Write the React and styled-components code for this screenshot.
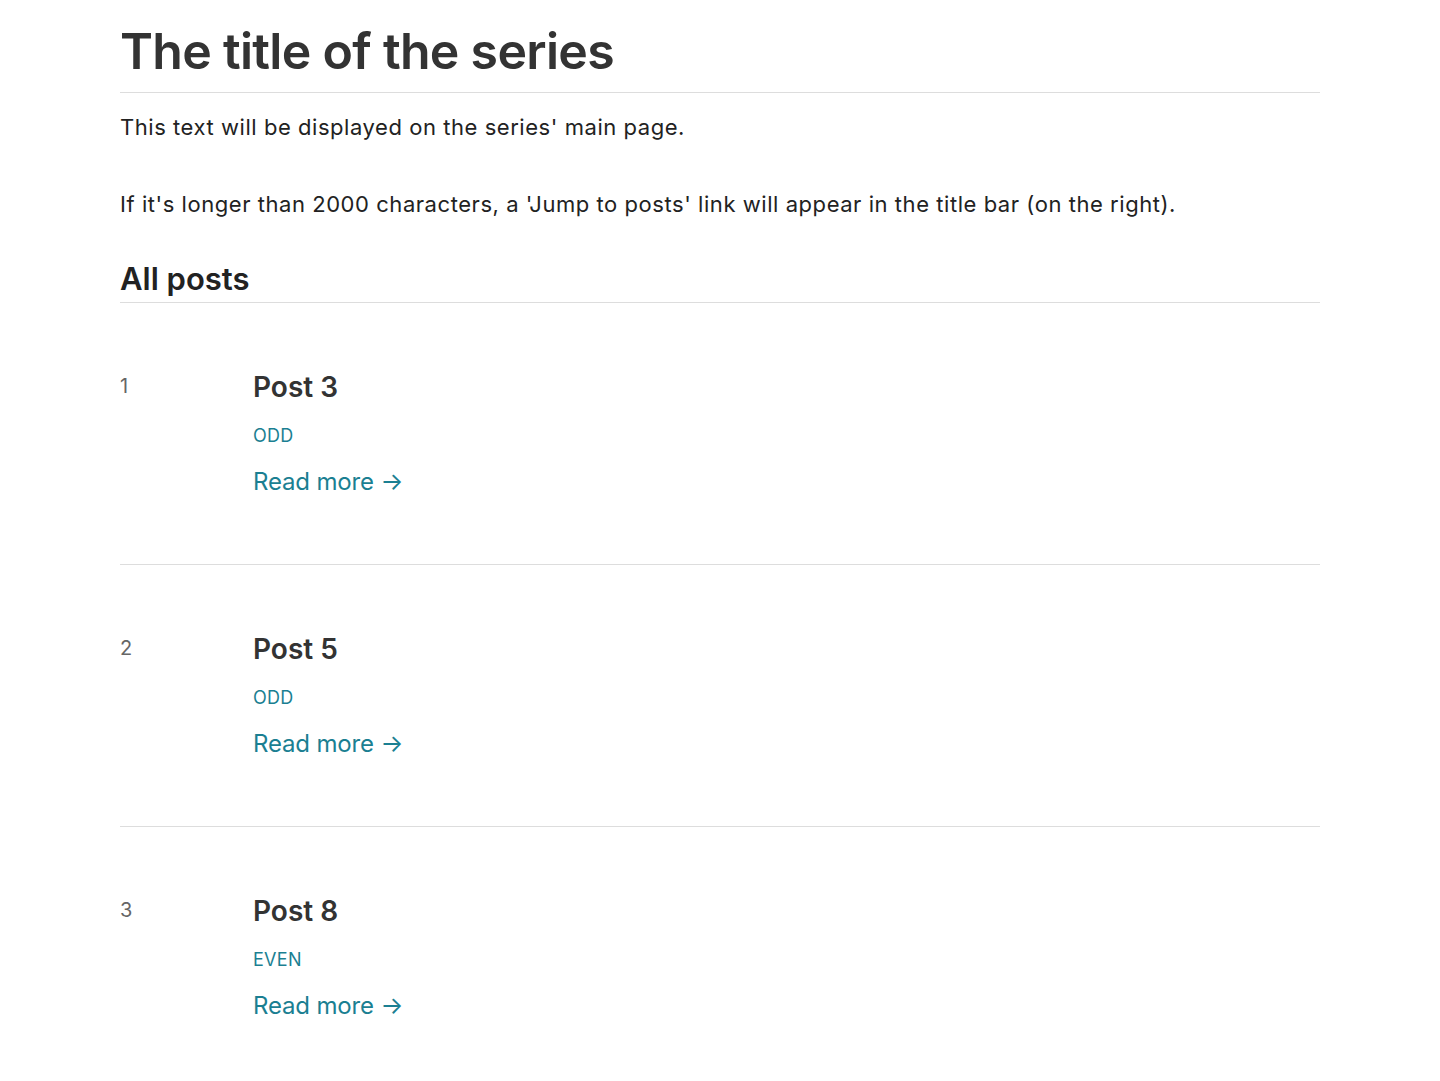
import React from "react";
import styled, { createGlobalStyle } from "styled-components";

const GlobalStyle = createGlobalStyle`
  html, body {
    margin: 0;
    padding: 0;
    background: #ffffff;
  }
  body {
    font-family: Inter, "Liberation Sans", sans-serif;
    color: #2b2b2b;
  }
`;

const posts = [
  { num: 1, title: "Post 3", tag: "ODD" },
  { num: 2, title: "Post 5", tag: "ODD" },
  { num: 3, title: "Post 8", tag: "EVEN" },
];

const Page = styled.main`
  width: 1200px;
  margin: 0 auto;
  padding-top: 20px;
`;

const Title = styled.h1`
  margin: 0;
  padding-bottom: 10px;
  font-size: 50px;
  line-height: 62px;
  font-weight: 600;
  letter-spacing: -0.7px;
  color: #333333;
  border-bottom: 1px solid #dddddd;
`;

const Intro = styled.div`
  padding-top: 17px;
  padding-bottom: 37px;
`;

const Paragraph = styled.p`
  margin: 0;
  font-size: 22px;
  line-height: 35px;
  letter-spacing: 0.55px;
  color: #222222;

  & + & {
    margin-top: 42px;
  }
`;

const SectionHeading = styled.h2`
  margin: 0;
  padding-bottom: 3px;
  font-size: 31px;
  line-height: 40px;
  font-weight: 600;
  color: #222222;
  border-bottom: 1px solid #dddddd;
`;

const PostList = styled.ol`
  list-style: none;
  margin: 0;
  padding: 0;
`;

const PostRow = styled.li`
  display: grid;
  grid-template-columns: 133px 1fr;
  padding: 66px 0 66px;
  border-bottom: ${(p) => (p.$last ? "none" : "1px solid #dddddd")};
`;

const PostNumber = styled.span`
  font-size: 20px;
  line-height: 34px;
  color: #666666;
`;

const PostBody = styled.div`
  display: flex;
  flex-direction: column;
  align-items: flex-start;
`;

const PostTitle = styled.h3`
  margin: 0;
  font-size: 28px;
  line-height: 36px;
  font-weight: 600;
  color: #333333;
`;

const Tag = styled.span`
  margin-top: 19px;
  font-size: 18px;
  line-height: 24px;
  letter-spacing: 0.3px;
  color: #1b7f92;
`;

const ReadMore = styled.a`
  margin-top: 18px;
  font-size: 24px;
  line-height: 32px;
  letter-spacing: -0.15px;
  color: #1b7f92;
  text-decoration: none;
`;

export default function App() {
  return (
    <>
      <GlobalStyle />
      <Page>
        <Title>The title of the series</Title>
        <Intro>
          <Paragraph>This text will be displayed on the series' main page.</Paragraph>
          <Paragraph>
            If it's longer than 2000 characters, a 'Jump to posts' link will appear in the title bar (on the right).
          </Paragraph>
        </Intro>
        <SectionHeading>All posts</SectionHeading>
        <PostList>
          {posts.map((post, i) => (
            <PostRow key={post.num} $last={i === posts.length - 1}>
              <PostNumber>{post.num}</PostNumber>
              <PostBody>
                <PostTitle>{post.title}</PostTitle>
                <Tag>{post.tag}</Tag>
                <ReadMore href="#">Read more →</ReadMore>
              </PostBody>
            </PostRow>
          ))}
        </PostList>
      </Page>
    </>
  );
}
